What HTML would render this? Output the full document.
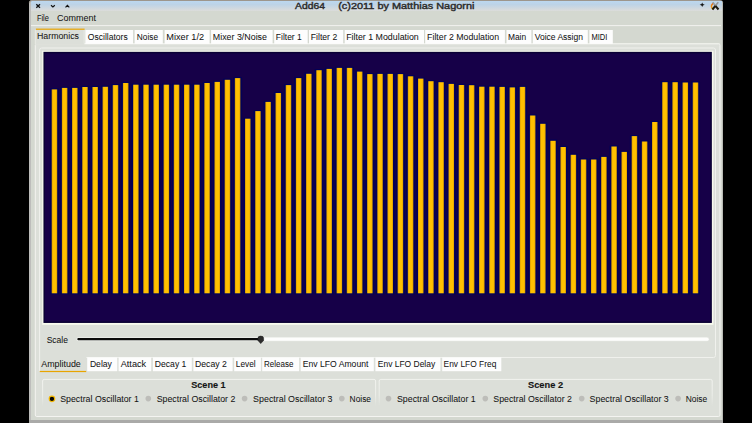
<!DOCTYPE html>
<html><head><meta charset="utf-8"><style>
html,body{margin:0;padding:0;background:#000;overflow:hidden;width:752px;height:423px}
svg{display:block}
text{font-family:"Liberation Sans", sans-serif}
</style></head><body>
<svg width="752" height="423" viewBox="0 0 752 423">
<defs>
<linearGradient id="tg" x1="0" y1="0" x2="0" y2="1">
<stop offset="0" stop-color="#bcd8f0"/><stop offset="0.35" stop-color="#bdd3e6"/><stop offset="1" stop-color="#dcdcda"/>
</linearGradient>
<linearGradient id="xo" x1="0" y1="0" x2="0" y2="1"><stop offset="0" stop-color="#f06a10"/><stop offset="1" stop-color="#e8b010"/></linearGradient>
<linearGradient id="gb" gradientUnits="userSpaceOnUse" x1="0" y1="379" x2="0" y2="406"><stop offset="0" stop-color="#f2f3ef"/><stop offset="0.6" stop-color="#eceee9"/><stop offset="1" stop-color="#dcdfd9"/></linearGradient>
<linearGradient id="bg" x1="0" y1="0" x2="1" y2="0">
<stop offset="0" stop-color="#d89a00"/><stop offset="0.25" stop-color="#ffc000"/><stop offset="0.75" stop-color="#ffc000"/><stop offset="1" stop-color="#d89a00"/>
</linearGradient>
</defs>
<rect x="0" y="0" width="752" height="423" fill="#000"/>
<rect x="29" y="0.5" width="694" height="423" rx="2" fill="#d4d8d0"/>
<rect x="29" y="0" width="694" height="1" fill="#9d968c"/>
<rect x="30" y="1" width="692" height="10" fill="url(#tg)"/>
<rect x="29" y="1" width="2" height="422" fill="#bdbdbb"/>
<rect x="722" y="1" width="1" height="422" fill="#b8bab4"/>
<rect x="29" y="420" width="694" height="3" fill="#aaaaa8"/>
<path d="M29 0 L32 0 A3 3 0 0 0 29 3 Z" fill="#000"/><path d="M723 0 L720 0 A3 3 0 0 1 723 3 Z" fill="#000"/>
<path d="M29.4 3.2 A2.6 2.6 0 0 1 32 0.6" stroke="#a09a90" stroke-width="0.9" fill="none"/>
<path d="M36.3 4.3 L40 7.8 M40 4.3 L36.3 7.8" stroke="#111" stroke-width="1.3"/>
<path d="M51 5.3 L52.9 7 L54.8 5.3" stroke="#111" stroke-width="1.2" fill="none"/>
<path d="M65.5 7.3 L67.4 5.4 L69.3 7.3" stroke="#111" stroke-width="1.2" fill="none"/>
<text x="295.00" y="8.60" font-size="9.0" font-weight="normal" fill="#2c2c2c" stroke="#2c2c2c" stroke-width="0.4" textLength="29.90" lengthAdjust="spacingAndGlyphs">Add64</text>
<text x="338.20" y="8.60" font-size="9.0" font-weight="normal" fill="#2c2c2c" stroke="#2c2c2c" stroke-width="0.4" textLength="136.20" lengthAdjust="spacingAndGlyphs">(c)2011 by Matthias Nagorni</text>
<path d="M702.2 2.5 L702.9 4.1 L704.7 4.8 L702.9 5.5 L702.2 7.1 L701.5 5.5 L699.7 4.8 L701.5 4.1 Z" fill="#151515"/>
<path d="M713.1 3.4 Q709.6 6.3 713.1 9.4" stroke="url(#xo)" stroke-width="1.4" fill="none"/>
<path d="M712.7 2.3 L715.4 5.8 M718.3 2.3 L715.4 5.8" stroke="#9a9a9a" stroke-width="1.6"/>
<path d="M715.4 5.8 L712.4 9.5 M715.4 5.8 L718.5 9.5" stroke="#1e1a10" stroke-width="2"/>
<text x="36.90" y="21.00" font-size="8.9" font-weight="normal" fill="#141414" stroke="#141414" stroke-width="0.04" textLength="12.00" lengthAdjust="spacingAndGlyphs">File</text>
<text x="57.10" y="21.00" font-size="8.9" font-weight="normal" fill="#141414" stroke="#141414" stroke-width="0.04" textLength="38.90" lengthAdjust="spacingAndGlyphs">Comment</text>
<rect x="31" y="25.1" width="690" height="1" fill="#f2f2ef"/>
<rect x="35.3" y="43.8" width="684.7" height="372.7" rx="1.5" fill="#dcdfd9" stroke="#f4f4f1" stroke-width="1"/>
<rect x="35.3" y="28.8" width="49" height="16" fill="#dcdfd9"/>
<path d="M35.3 44 L35.3 30 M84.2 30 L84.2 43.6 L719.7 43.6" stroke="#eef0ea" stroke-width="0.8" fill="none"/>
<rect x="35.9" y="28.6" width="48.699999999999996" height="1.2" fill="#e8a400"/>
<text x="37.00" y="38.90" font-size="8.9" font-weight="normal" fill="#141414" stroke="#141414" stroke-width="0.04" textLength="42.00" lengthAdjust="spacingAndGlyphs">Harmonics</text>
<rect x="85.3" y="30" width="47.8" height="13.9" fill="#fdfdfd"/>
<text x="87.80" y="39.90" font-size="8.9" font-weight="normal" fill="#141414" stroke="#141414" stroke-width="0.04" textLength="39.90" lengthAdjust="spacingAndGlyphs">Oscillators</text>
<rect x="134.6" y="30" width="28.200000000000017" height="13.9" fill="#fdfdfd"/>
<text x="136.80" y="39.90" font-size="8.9" font-weight="normal" fill="#141414" stroke="#141414" stroke-width="0.04" textLength="21.20" lengthAdjust="spacingAndGlyphs">Noise</text>
<rect x="164.6" y="30" width="45.0" height="13.9" fill="#fdfdfd"/>
<text x="166.30" y="39.90" font-size="8.9" font-weight="normal" fill="#141414" stroke="#141414" stroke-width="0.04" textLength="37.80" lengthAdjust="spacingAndGlyphs">Mixer 1/2</text>
<rect x="211.1" y="30" width="61.50000000000003" height="13.9" fill="#fdfdfd"/>
<text x="212.80" y="39.90" font-size="8.9" font-weight="normal" fill="#141414" stroke="#141414" stroke-width="0.04" textLength="54.20" lengthAdjust="spacingAndGlyphs">Mixer 3/Noise</text>
<rect x="274.2" y="30" width="33.5" height="13.9" fill="#fdfdfd"/>
<text x="275.80" y="39.90" font-size="8.9" font-weight="normal" fill="#141414" stroke="#141414" stroke-width="0.04" textLength="26.00" lengthAdjust="spacingAndGlyphs">Filter 1</text>
<rect x="309.0" y="30" width="34.19999999999999" height="13.9" fill="#fdfdfd"/>
<text x="310.80" y="39.90" font-size="8.9" font-weight="normal" fill="#141414" stroke="#141414" stroke-width="0.04" textLength="26.40" lengthAdjust="spacingAndGlyphs">Filter 2</text>
<rect x="344.7" y="30" width="79.30000000000001" height="13.9" fill="#fdfdfd"/>
<text x="346.20" y="39.90" font-size="8.9" font-weight="normal" fill="#141414" stroke="#141414" stroke-width="0.04" textLength="72.60" lengthAdjust="spacingAndGlyphs">Filter 1 Modulation</text>
<rect x="425.2" y="30" width="79.69999999999999" height="13.9" fill="#fdfdfd"/>
<text x="427.10" y="39.90" font-size="8.9" font-weight="normal" fill="#141414" stroke="#141414" stroke-width="0.04" textLength="72.00" lengthAdjust="spacingAndGlyphs">Filter 2 Modulation</text>
<rect x="506.5" y="30" width="24.899999999999977" height="13.9" fill="#fdfdfd"/>
<text x="507.90" y="39.90" font-size="8.9" font-weight="normal" fill="#141414" stroke="#141414" stroke-width="0.04" textLength="18.20" lengthAdjust="spacingAndGlyphs">Main</text>
<rect x="532.8" y="30" width="55.0" height="13.9" fill="#fdfdfd"/>
<text x="534.70" y="39.90" font-size="8.9" font-weight="normal" fill="#141414" stroke="#141414" stroke-width="0.04" textLength="48.30" lengthAdjust="spacingAndGlyphs">Voice Assign</text>
<rect x="589.4" y="30" width="23.399999999999977" height="13.9" fill="#fdfdfd"/>
<text x="591.50" y="39.90" font-size="8.9" font-weight="normal" fill="#141414" stroke="#141414" stroke-width="0.04" textLength="15.90" lengthAdjust="spacingAndGlyphs">MIDI</text>
<path d="M39.6 371 L39.6 50 Q39.6 48 41.6 48 L713.5 48 Q715.5 48 715.5 50 L715.5 355.5 Q715.5 357.5 713.5 357.5 L86.3 357.5" fill="none" stroke="#f0f1ed" stroke-width="1"/>
<rect x="42.2" y="50.8" width="671.2" height="274" fill="#f8faee"/>
<rect x="44.2" y="52.6" width="666.9" height="269.6" fill="#160048" stroke="#0a0034" stroke-width="1.5"/>
<rect x="49.90" y="88.20" width="9.1" height="206.30" rx="1.2" fill="#020058"/>
<rect x="51.70" y="89.40" width="5.5" height="203.90" fill="url(#bg)"/>
<rect x="60.08" y="86.70" width="9.1" height="207.80" rx="1.2" fill="#020058"/>
<rect x="61.88" y="87.90" width="5.5" height="205.40" fill="url(#bg)"/>
<rect x="70.25" y="86.70" width="9.1" height="207.80" rx="1.2" fill="#020058"/>
<rect x="72.05" y="87.90" width="5.5" height="205.40" fill="url(#bg)"/>
<rect x="80.43" y="85.80" width="9.1" height="208.70" rx="1.2" fill="#020058"/>
<rect x="82.23" y="87.00" width="5.5" height="206.30" fill="url(#bg)"/>
<rect x="90.60" y="85.80" width="9.1" height="208.70" rx="1.2" fill="#020058"/>
<rect x="92.40" y="87.00" width="5.5" height="206.30" fill="url(#bg)"/>
<rect x="100.78" y="85.60" width="9.1" height="208.90" rx="1.2" fill="#020058"/>
<rect x="102.58" y="86.80" width="5.5" height="206.50" fill="url(#bg)"/>
<rect x="110.95" y="83.90" width="9.1" height="210.60" rx="1.2" fill="#020058"/>
<rect x="112.75" y="85.10" width="5.5" height="208.20" fill="url(#bg)"/>
<rect x="121.13" y="81.80" width="9.1" height="212.70" rx="1.2" fill="#020058"/>
<rect x="122.93" y="83.00" width="5.5" height="210.30" fill="url(#bg)"/>
<rect x="131.30" y="83.50" width="9.1" height="211.00" rx="1.2" fill="#020058"/>
<rect x="133.10" y="84.70" width="5.5" height="208.60" fill="url(#bg)"/>
<rect x="141.47" y="83.50" width="9.1" height="211.00" rx="1.2" fill="#020058"/>
<rect x="143.28" y="84.70" width="5.5" height="208.60" fill="url(#bg)"/>
<rect x="151.65" y="83.50" width="9.1" height="211.00" rx="1.2" fill="#020058"/>
<rect x="153.45" y="84.70" width="5.5" height="208.60" fill="url(#bg)"/>
<rect x="161.82" y="83.50" width="9.1" height="211.00" rx="1.2" fill="#020058"/>
<rect x="163.62" y="84.70" width="5.5" height="208.60" fill="url(#bg)"/>
<rect x="172.00" y="83.50" width="9.1" height="211.00" rx="1.2" fill="#020058"/>
<rect x="173.80" y="84.70" width="5.5" height="208.60" fill="url(#bg)"/>
<rect x="182.18" y="83.50" width="9.1" height="211.00" rx="1.2" fill="#020058"/>
<rect x="183.98" y="84.70" width="5.5" height="208.60" fill="url(#bg)"/>
<rect x="192.35" y="83.50" width="9.1" height="211.00" rx="1.2" fill="#020058"/>
<rect x="194.15" y="84.70" width="5.5" height="208.60" fill="url(#bg)"/>
<rect x="202.52" y="81.80" width="9.1" height="212.70" rx="1.2" fill="#020058"/>
<rect x="204.32" y="83.00" width="5.5" height="210.30" fill="url(#bg)"/>
<rect x="212.70" y="80.70" width="9.1" height="213.80" rx="1.2" fill="#020058"/>
<rect x="214.50" y="81.90" width="5.5" height="211.40" fill="url(#bg)"/>
<rect x="222.88" y="78.60" width="9.1" height="215.90" rx="1.2" fill="#020058"/>
<rect x="224.68" y="79.80" width="5.5" height="213.50" fill="url(#bg)"/>
<rect x="233.05" y="76.90" width="9.1" height="217.60" rx="1.2" fill="#020058"/>
<rect x="234.85" y="78.10" width="5.5" height="215.20" fill="url(#bg)"/>
<rect x="243.23" y="117.50" width="9.1" height="177.00" rx="1.2" fill="#020058"/>
<rect x="245.03" y="118.70" width="5.5" height="174.60" fill="url(#bg)"/>
<rect x="253.40" y="109.90" width="9.1" height="184.60" rx="1.2" fill="#020058"/>
<rect x="255.20" y="111.10" width="5.5" height="182.20" fill="url(#bg)"/>
<rect x="263.57" y="100.70" width="9.1" height="193.80" rx="1.2" fill="#020058"/>
<rect x="265.38" y="101.90" width="5.5" height="191.40" fill="url(#bg)"/>
<rect x="273.75" y="91.80" width="9.1" height="202.70" rx="1.2" fill="#020058"/>
<rect x="275.55" y="93.00" width="5.5" height="200.30" fill="url(#bg)"/>
<rect x="283.93" y="83.90" width="9.1" height="210.60" rx="1.2" fill="#020058"/>
<rect x="285.73" y="85.10" width="5.5" height="208.20" fill="url(#bg)"/>
<rect x="294.10" y="76.90" width="9.1" height="217.60" rx="1.2" fill="#020058"/>
<rect x="295.90" y="78.10" width="5.5" height="215.20" fill="url(#bg)"/>
<rect x="304.28" y="72.60" width="9.1" height="221.90" rx="1.2" fill="#020058"/>
<rect x="306.08" y="73.80" width="5.5" height="219.50" fill="url(#bg)"/>
<rect x="314.45" y="69.00" width="9.1" height="225.50" rx="1.2" fill="#020058"/>
<rect x="316.25" y="70.20" width="5.5" height="223.10" fill="url(#bg)"/>
<rect x="324.62" y="67.70" width="9.1" height="226.80" rx="1.2" fill="#020058"/>
<rect x="326.43" y="68.90" width="5.5" height="224.40" fill="url(#bg)"/>
<rect x="334.80" y="66.70" width="9.1" height="227.80" rx="1.2" fill="#020058"/>
<rect x="336.60" y="67.90" width="5.5" height="225.40" fill="url(#bg)"/>
<rect x="344.98" y="66.70" width="9.1" height="227.80" rx="1.2" fill="#020058"/>
<rect x="346.78" y="67.90" width="5.5" height="225.40" fill="url(#bg)"/>
<rect x="355.15" y="70.40" width="9.1" height="224.10" rx="1.2" fill="#020058"/>
<rect x="356.95" y="71.60" width="5.5" height="221.70" fill="url(#bg)"/>
<rect x="365.32" y="72.90" width="9.1" height="221.60" rx="1.2" fill="#020058"/>
<rect x="367.12" y="74.10" width="5.5" height="219.20" fill="url(#bg)"/>
<rect x="375.50" y="72.70" width="9.1" height="221.80" rx="1.2" fill="#020058"/>
<rect x="377.30" y="73.90" width="5.5" height="219.40" fill="url(#bg)"/>
<rect x="385.68" y="72.70" width="9.1" height="221.80" rx="1.2" fill="#020058"/>
<rect x="387.48" y="73.90" width="5.5" height="219.40" fill="url(#bg)"/>
<rect x="395.85" y="72.90" width="9.1" height="221.60" rx="1.2" fill="#020058"/>
<rect x="397.65" y="74.10" width="5.5" height="219.20" fill="url(#bg)"/>
<rect x="406.02" y="75.10" width="9.1" height="219.40" rx="1.2" fill="#020058"/>
<rect x="407.82" y="76.30" width="5.5" height="217.00" fill="url(#bg)"/>
<rect x="416.20" y="77.40" width="9.1" height="217.10" rx="1.2" fill="#020058"/>
<rect x="418.00" y="78.60" width="5.5" height="214.70" fill="url(#bg)"/>
<rect x="426.38" y="80.00" width="9.1" height="214.50" rx="1.2" fill="#020058"/>
<rect x="428.18" y="81.20" width="5.5" height="212.10" fill="url(#bg)"/>
<rect x="436.55" y="81.00" width="9.1" height="213.50" rx="1.2" fill="#020058"/>
<rect x="438.35" y="82.20" width="5.5" height="211.10" fill="url(#bg)"/>
<rect x="446.73" y="82.70" width="9.1" height="211.80" rx="1.2" fill="#020058"/>
<rect x="448.53" y="83.90" width="5.5" height="209.40" fill="url(#bg)"/>
<rect x="456.90" y="83.80" width="9.1" height="210.70" rx="1.2" fill="#020058"/>
<rect x="458.70" y="85.00" width="5.5" height="208.30" fill="url(#bg)"/>
<rect x="467.07" y="84.00" width="9.1" height="210.50" rx="1.2" fill="#020058"/>
<rect x="468.88" y="85.20" width="5.5" height="208.10" fill="url(#bg)"/>
<rect x="477.25" y="85.50" width="9.1" height="209.00" rx="1.2" fill="#020058"/>
<rect x="479.05" y="86.70" width="5.5" height="206.60" fill="url(#bg)"/>
<rect x="487.43" y="85.50" width="9.1" height="209.00" rx="1.2" fill="#020058"/>
<rect x="489.23" y="86.70" width="5.5" height="206.60" fill="url(#bg)"/>
<rect x="497.60" y="85.70" width="9.1" height="208.80" rx="1.2" fill="#020058"/>
<rect x="499.40" y="86.90" width="5.5" height="206.40" fill="url(#bg)"/>
<rect x="507.78" y="86.20" width="9.1" height="208.30" rx="1.2" fill="#020058"/>
<rect x="509.58" y="87.40" width="5.5" height="205.90" fill="url(#bg)"/>
<rect x="517.95" y="85.70" width="9.1" height="208.80" rx="1.2" fill="#020058"/>
<rect x="519.75" y="86.90" width="5.5" height="206.40" fill="url(#bg)"/>
<rect x="528.13" y="114.30" width="9.1" height="180.20" rx="1.2" fill="#020058"/>
<rect x="529.93" y="115.50" width="5.5" height="177.80" fill="url(#bg)"/>
<rect x="538.30" y="122.60" width="9.1" height="171.90" rx="1.2" fill="#020058"/>
<rect x="540.10" y="123.80" width="5.5" height="169.50" fill="url(#bg)"/>
<rect x="548.48" y="139.60" width="9.1" height="154.90" rx="1.2" fill="#020058"/>
<rect x="550.28" y="140.80" width="5.5" height="152.50" fill="url(#bg)"/>
<rect x="558.65" y="145.80" width="9.1" height="148.70" rx="1.2" fill="#020058"/>
<rect x="560.45" y="147.00" width="5.5" height="146.30" fill="url(#bg)"/>
<rect x="568.83" y="153.60" width="9.1" height="140.90" rx="1.2" fill="#020058"/>
<rect x="570.63" y="154.80" width="5.5" height="138.50" fill="url(#bg)"/>
<rect x="579.00" y="158.30" width="9.1" height="136.20" rx="1.2" fill="#020058"/>
<rect x="580.80" y="159.50" width="5.5" height="133.80" fill="url(#bg)"/>
<rect x="589.18" y="158.30" width="9.1" height="136.20" rx="1.2" fill="#020058"/>
<rect x="590.98" y="159.50" width="5.5" height="133.80" fill="url(#bg)"/>
<rect x="599.35" y="155.70" width="9.1" height="138.80" rx="1.2" fill="#020058"/>
<rect x="601.15" y="156.90" width="5.5" height="136.40" fill="url(#bg)"/>
<rect x="609.53" y="145.30" width="9.1" height="149.20" rx="1.2" fill="#020058"/>
<rect x="611.33" y="146.50" width="5.5" height="146.80" fill="url(#bg)"/>
<rect x="619.70" y="150.70" width="9.1" height="143.80" rx="1.2" fill="#020058"/>
<rect x="621.50" y="151.90" width="5.5" height="141.40" fill="url(#bg)"/>
<rect x="629.88" y="134.90" width="9.1" height="159.60" rx="1.2" fill="#020058"/>
<rect x="631.68" y="136.10" width="5.5" height="157.20" fill="url(#bg)"/>
<rect x="640.05" y="140.30" width="9.1" height="154.20" rx="1.2" fill="#020058"/>
<rect x="641.85" y="141.50" width="5.5" height="151.80" fill="url(#bg)"/>
<rect x="650.23" y="120.80" width="9.1" height="173.70" rx="1.2" fill="#020058"/>
<rect x="652.03" y="122.00" width="5.5" height="171.30" fill="url(#bg)"/>
<rect x="660.40" y="81.00" width="9.1" height="213.50" rx="1.2" fill="#020058"/>
<rect x="662.20" y="82.20" width="5.5" height="211.10" fill="url(#bg)"/>
<rect x="670.58" y="81.00" width="9.1" height="213.50" rx="1.2" fill="#020058"/>
<rect x="672.38" y="82.20" width="5.5" height="211.10" fill="url(#bg)"/>
<rect x="680.75" y="81.30" width="9.1" height="213.20" rx="1.2" fill="#020058"/>
<rect x="682.55" y="82.50" width="5.5" height="210.80" fill="url(#bg)"/>
<rect x="690.93" y="81.30" width="9.1" height="213.20" rx="1.2" fill="#020058"/>
<rect x="692.73" y="82.50" width="5.5" height="210.80" fill="url(#bg)"/>
<text x="46.70" y="343.00" font-size="8.9" font-weight="normal" fill="#141414" stroke="#141414" stroke-width="0.04" textLength="21.30" lengthAdjust="spacingAndGlyphs">Scale</text>
<line x1="78.4" y1="339.2" x2="707" y2="339.2" stroke="#f7f8f5" stroke-width="4.2" stroke-linecap="round" opacity="0.55"/>
<line x1="78.4" y1="339.2" x2="259" y2="339.2" stroke="#0c0c0c" stroke-width="2.2" stroke-linecap="round"/>
<line x1="261" y1="339.2" x2="707" y2="339.2" stroke="#fdfdfc" stroke-width="3" stroke-linecap="round"/>
<path d="M257.9 338.4 Q257.9 336.1 260.75 336.1 Q263.6 336.1 263.6 338.4 L263.6 340.4 L260.75 343.6 L257.9 340.4 Z" fill="#2c2c2c" stroke="#151515" stroke-width="0.5"/>
<rect x="39.8" y="370.9" width="46.400000000000006" height="1.2" fill="#e8a400"/>
<text x="41.30" y="367.00" font-size="8.9" font-weight="normal" fill="#141414" stroke="#141414" stroke-width="0.04" textLength="39.50" lengthAdjust="spacingAndGlyphs">Amplitude</text>
<rect x="87.2" y="357.4" width="30.0" height="13.8" fill="#fdfdfd"/>
<text x="89.90" y="366.60" font-size="8.9" font-weight="normal" fill="#141414" stroke="#141414" stroke-width="0.04" textLength="22.00" lengthAdjust="spacingAndGlyphs">Delay</text>
<rect x="118.6" y="357.4" width="32.599999999999994" height="13.8" fill="#fdfdfd"/>
<text x="120.70" y="366.60" font-size="8.9" font-weight="normal" fill="#141414" stroke="#141414" stroke-width="0.04" textLength="25.50" lengthAdjust="spacingAndGlyphs">Attack</text>
<rect x="152.9" y="357.4" width="38.900000000000006" height="13.8" fill="#fdfdfd"/>
<text x="154.80" y="366.60" font-size="8.9" font-weight="normal" fill="#141414" stroke="#141414" stroke-width="0.04" textLength="31.60" lengthAdjust="spacingAndGlyphs">Decay 1</text>
<rect x="193.4" y="357.4" width="39.19999999999999" height="13.8" fill="#fdfdfd"/>
<text x="195.00" y="366.60" font-size="8.9" font-weight="normal" fill="#141414" stroke="#141414" stroke-width="0.04" textLength="31.90" lengthAdjust="spacingAndGlyphs">Decay 2</text>
<rect x="234.2" y="357.4" width="26.69999999999999" height="13.8" fill="#fdfdfd"/>
<text x="235.80" y="366.60" font-size="8.9" font-weight="normal" fill="#141414" stroke="#141414" stroke-width="0.04" textLength="19.80" lengthAdjust="spacingAndGlyphs">Level</text>
<rect x="262.2" y="357.4" width="36.900000000000034" height="13.8" fill="#fdfdfd"/>
<text x="264.10" y="366.60" font-size="8.9" font-weight="normal" fill="#141414" stroke="#141414" stroke-width="0.04" textLength="29.30" lengthAdjust="spacingAndGlyphs">Release</text>
<rect x="300.7" y="357.4" width="73.10000000000002" height="13.8" fill="#fdfdfd"/>
<text x="302.70" y="366.60" font-size="8.9" font-weight="normal" fill="#141414" stroke="#141414" stroke-width="0.04" textLength="65.70" lengthAdjust="spacingAndGlyphs">Env LFO Amount</text>
<rect x="375.4" y="357.4" width="65.0" height="13.8" fill="#fdfdfd"/>
<text x="377.80" y="366.60" font-size="8.9" font-weight="normal" fill="#141414" stroke="#141414" stroke-width="0.04" textLength="57.40" lengthAdjust="spacingAndGlyphs">Env LFO Delay</text>
<rect x="442.2" y="357.4" width="59.10000000000002" height="13.8" fill="#fdfdfd"/>
<text x="443.60" y="366.60" font-size="8.9" font-weight="normal" fill="#141414" stroke="#141414" stroke-width="0.04" textLength="52.70" lengthAdjust="spacingAndGlyphs">Env LFO Freq</text>
<path d="M42.6 406 L42.6 381 Q42.6 379.4 44.2 379.4 L374 379.4 Q375.6 379.4 375.6 381 L375.6 406" fill="none" stroke="url(#gb)" stroke-width="1"/>
<path d="M379.2 406 L379.2 381 Q379.2 379.4 380.8 379.4 L710.6 379.4 Q712.2 379.4 712.2 381 L712.2 406" fill="none" stroke="url(#gb)" stroke-width="1"/>
<text x="191.20" y="387.80" font-size="8.9" font-weight="bold" fill="#141414" stroke="#141414" stroke-width="0.12" textLength="34.50" lengthAdjust="spacingAndGlyphs">Scene 1</text>
<text x="528.00" y="387.80" font-size="8.9" font-weight="bold" fill="#141414" stroke="#141414" stroke-width="0.12" textLength="35.10" lengthAdjust="spacingAndGlyphs">Scene 2</text>
<circle cx="51.95" cy="398.8" r="2.75" fill="#050505" stroke="#f5b800" stroke-width="1.15"/>
<text x="60.20" y="402.00" font-size="8.9" font-weight="normal" fill="#141414" stroke="#141414" stroke-width="0.04" textLength="78.70" lengthAdjust="spacingAndGlyphs">Spectral Oscillator 1</text>
<circle cx="148.3" cy="398.6" r="2.8" fill="#bdbdb9"/>
<text x="156.70" y="402.00" font-size="8.9" font-weight="normal" fill="#141414" stroke="#141414" stroke-width="0.04" textLength="78.70" lengthAdjust="spacingAndGlyphs">Spectral Oscillator 2</text>
<circle cx="244.6" cy="398.6" r="2.8" fill="#bdbdb9"/>
<text x="253.10" y="402.00" font-size="8.9" font-weight="normal" fill="#141414" stroke="#141414" stroke-width="0.04" textLength="79.40" lengthAdjust="spacingAndGlyphs">Spectral Oscillator 3</text>
<circle cx="341.8" cy="398.6" r="2.8" fill="#bdbdb9"/>
<text x="349.60" y="402.00" font-size="8.9" font-weight="normal" fill="#141414" stroke="#141414" stroke-width="0.04" textLength="21.40" lengthAdjust="spacingAndGlyphs">Noise</text>
<circle cx="388.5" cy="398.6" r="2.8" fill="#bdbdb9"/>
<text x="397.00" y="402.00" font-size="8.9" font-weight="normal" fill="#141414" stroke="#141414" stroke-width="0.04" textLength="78.70" lengthAdjust="spacingAndGlyphs">Spectral Oscillator 1</text>
<circle cx="485.3" cy="398.6" r="2.8" fill="#bdbdb9"/>
<text x="493.30" y="402.00" font-size="8.9" font-weight="normal" fill="#141414" stroke="#141414" stroke-width="0.04" textLength="78.70" lengthAdjust="spacingAndGlyphs">Spectral Oscillator 2</text>
<circle cx="581.7" cy="398.6" r="2.8" fill="#bdbdb9"/>
<text x="589.60" y="402.00" font-size="8.9" font-weight="normal" fill="#141414" stroke="#141414" stroke-width="0.04" textLength="79.20" lengthAdjust="spacingAndGlyphs">Spectral Oscillator 3</text>
<circle cx="678.1" cy="398.6" r="2.8" fill="#bdbdb9"/>
<text x="685.70" y="402.00" font-size="8.9" font-weight="normal" fill="#141414" stroke="#141414" stroke-width="0.04" textLength="21.60" lengthAdjust="spacingAndGlyphs">Noise</text>
</svg>
</body></html>
